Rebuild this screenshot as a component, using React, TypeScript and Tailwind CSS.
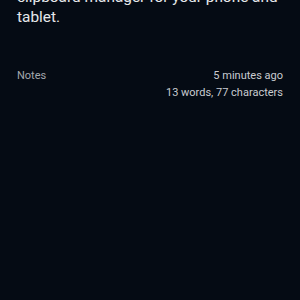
export default function App() {
  return (
    <div
      className="w-[300px] h-[300px] overflow-hidden bg-[#050b14] px-[17px]"
      style={{ fontFamily: "Roboto, 'Noto Sans', sans-serif" }}
    >
      <p className="-mt-[13px] whitespace-nowrap text-[15.4px] leading-[20px] text-[#e6e8eb]">
        clipboard manager for your phone and
        <br />
        tablet.
      </p>
      <div className="mt-[40px] flex justify-between text-[11px] leading-[17px]">
        <span className="text-[#a3a7ad]">Notes</span>
        <div className="flex flex-col items-end text-[#c9ccd1]">
          <span>5 minutes ago</span>
          <span>13 words, 77 characters</span>
        </div>
      </div>
    </div>
  );
}
